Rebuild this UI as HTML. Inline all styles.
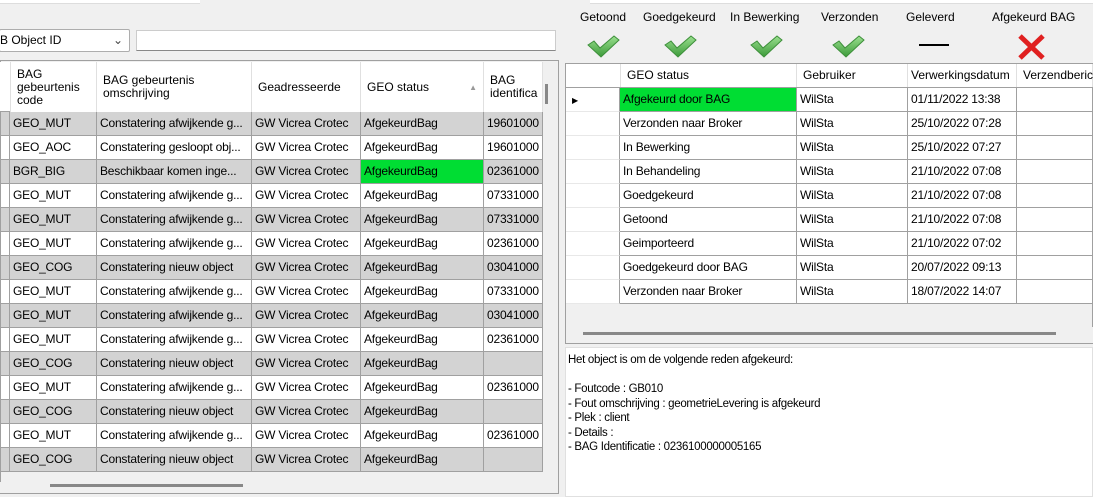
<!DOCTYPE html>
<html><head><style>
*{margin:0;padding:0;box-sizing:border-box}
body{width:1093px;height:497px;background:#f0f0f0;font-family:"Liberation Sans",sans-serif;font-size:12px;color:#000;position:relative;overflow:hidden}
.a{position:absolute}
.c{position:absolute;border-right:1px solid #a0a0a0;border-bottom:1px solid #a0a0a0;padding-left:3px;white-space:nowrap;overflow:hidden;line-height:23px;height:24px;letter-spacing:-0.2px}
.h{position:absolute;border-right:1px solid #e0e0e0;background:#fff;padding-left:6px;font-size:12px;line-height:13px;display:flex;align-items:center}
.lbl{position:absolute;top:10px;font-size:12px}
</style></head><body>
<div class="a" style="left:0;top:0;width:1093px;height:4px;background:#fff;border-bottom:1px solid #ddd"></div>
<div class="a" style="left:200px;top:0;width:390px;height:5px;background:#f0f0f0;border-bottom:1px solid #f0f0f0"></div>
<!-- combo -->
<div class="a" style="left:-1px;top:29px;width:131px;height:23px;background:#fff;border:1px solid #adadad;border-radius:2px;padding-left:0;line-height:21px">B Object ID<span style="position:absolute;right:6px;top:0;color:#444">&#8964;</span></div>
<div class="a" style="left:136px;top:30px;width:420px;height:21px;background:#fff;border:1px solid #ccc;border-bottom:1px solid #888"></div>
<!-- left grid -->
<div class="a" style="left:0;top:60px;width:559px;height:434px;border:1px solid #a0a0a0;background:#f0f0f0"></div>
<div class="a" style="left:0;top:62px;width:543px;height:50px;background:#fff;border-bottom:1px solid #a0a0a0"></div>
<div class="h" style="left:10px;top:62px;width:87px;height:50px;border-left:1px solid #e0e0e0">BAG<br>gebeurtenis<br>code</div>
<div class="h" style="left:97px;top:62px;width:155px;height:50px">BAG gebeurtenis<br>omschrijving</div>
<div class="h" style="left:252px;top:62px;width:109px;height:50px">Geadresseerde</div>
<div class="h" style="left:361px;top:62px;width:123px;height:50px">GEO status<span style="position:absolute;right:6px;font-size:8px;color:#999">&#9650;</span></div>
<div class="h" style="left:484px;top:62px;width:59px;height:50px">BAG<br>identifica</div>
<div class="a" style="left:543px;top:62px;width:15px;height:420px;background:#f0f0f0"></div>
<div class="a" style="left:545px;top:84px;width:3px;height:20px;background:#888"></div>
<div class="a" style="left:0;top:482px;width:543px;height:11px;background:#f0f0f0"></div>
<div class="a" style="left:50px;top:484px;width:193px;height:3px;background:#888"></div>
<div id="lg"></div>
<!-- status icons -->
<div class="lbl" style="left:580px">Getoond</div>
<div class="lbl" style="left:643px">Goedgekeurd</div>
<div class="lbl" style="left:730px">In Bewerking</div>
<div class="lbl" style="left:821px">Verzonden</div>
<div class="lbl" style="left:906px">Geleverd</div>
<div class="lbl" style="left:992px">Afgekeurd BAG</div>
<svg class="a" style="left:580px;top:32px" width="520" height="28">
<defs><linearGradient id="g" x1="0" y1="0" x2="0" y2="1"><stop offset="0" stop-color="#9be08f"/><stop offset="1" stop-color="#3c9a3a"/></linearGradient></defs>
<g fill="url(#g)" stroke="#3d8f3a" stroke-width="1">
<path d="M8 13 L14 9 L20 16 L34 4 L39 8 L21 25 Z"/>
<path d="M85 13 L91 9 L97 16 L111 4 L116 8 L98 25 Z"/>
<path d="M171 13 L177 9 L183 16 L197 4 L202 8 L184 25 Z"/>
<path d="M253 13 L259 9 L265 16 L279 4 L284 8 L266 25 Z"/>
</g>
<rect x="339" y="12" width="30" height="2" fill="#000"/>
<path d="M440 4 L463 26 M463 4 L440 26" stroke="#e02020" stroke-width="5"/>
</svg>
<!-- right grid -->
<div class="a" style="left:565px;top:63px;width:528px;height:281px;border:1px solid #a0a0a0;background:#f0f0f0"></div>
<div class="a" style="left:566px;top:64px;width:527px;height:24px;background:#fff;border-bottom:1px solid #a0a0a0"></div>
<div class="h" style="left:620px;top:64px;width:177px;height:23px;border-left:1px solid #e0e0e0">GEO status</div>
<div class="h" style="left:797px;top:64px;width:111px;height:23px">Gebruiker</div>
<div class="h" style="left:908px;top:64px;width:109px;height:23px;padding-left:3px">Verwerkingsdatum</div>
<div class="h" style="left:1017px;top:64px;width:76px;height:23px;padding-left:6px">Verzendberic</div>
<div id="rg"></div>
<div class="a" style="left:566px;top:327px;width:527px;height:16px;background:#f0f0f0"></div>
<div class="a" style="left:583px;top:332px;width:473px;height:3px;background:#888"></div>
<!-- text box -->
<div class="a" style="left:565px;top:347px;width:528px;height:150px;background:#fff;border:1px solid #e0e0e0;padding:5px 0 0 2px;line-height:14.5px;font-size:11.5px;letter-spacing:-0.3px">Het object is om de volgende reden afgekeurd:<br><br>- Foutcode : GB010<br>- Fout omschrijving : geometrieLevering is afgekeurd<br>- Plek : client<br>- Details :<br>- BAG Identificatie : 0236100000005165</div>
<script>
var L=[["GEO_MUT","Constatering afwijkende g...","19601000"],["GEO_AOC","Constatering gesloopt obj...","19601000"],["BGR_BIG","Beschikbaar komen inge...","02361000"],["GEO_MUT","Constatering afwijkende g...","07331000"],["GEO_MUT","Constatering afwijkende g...","07331000"],["GEO_MUT","Constatering afwijkende g...","02361000"],["GEO_COG","Constatering nieuw object","03041000"],["GEO_MUT","Constatering afwijkende g...","07331000"],["GEO_MUT","Constatering afwijkende g...","03041000"],["GEO_MUT","Constatering afwijkende g...","02361000"],["GEO_COG","Constatering nieuw object",""],["GEO_MUT","Constatering afwijkende g...","02361000"],["GEO_COG","Constatering nieuw object",""],["GEO_MUT","Constatering afwijkende g...","02361000"],["GEO_COG","Constatering nieuw object",""]];
var h="",cols=[[10,87],[97,155],[252,109],[361,123],[484,59]];
L.forEach(function(r,i){var y=112+i*24,bg=i%2==0?"#d3d3d3":"#fff";var v=[r[0],r[1],"GW Vicrea Crotec","AfgekeurdBag",r[2]];
h+='<div class="c" style="left:1px;top:'+y+'px;width:9px;background:'+bg+'"></div>';
cols.forEach(function(c,j){var b=(i==2&&j==3)?"#00dd33":bg;h+='<div class="c" style="left:'+c[0]+'px;top:'+y+'px;width:'+c[1]+'px;background:'+b+'">'+v[j]+'</div>';});});
document.getElementById("lg").innerHTML=h;
var R=[["Afgekeurd door BAG","01/11/2022 13:38"],["Verzonden naar Broker","25/10/2022 07:28"],["In Bewerking","25/10/2022 07:27"],["In Behandeling","21/10/2022 07:08"],["Goedgekeurd","21/10/2022 07:08"],["Getoond","21/10/2022 07:08"],["Geimporteerd","21/10/2022 07:02"],["Goedgekeurd door BAG","20/07/2022 09:13"],["Verzonden naar Broker","18/07/2022 14:07"]];
h="";R.forEach(function(r,i){var y=88+i*24;
h+='<div class="c" style="left:566px;top:'+y+'px;width:54px;background:#fff;border-right:1px solid #a0a0a0;border-bottom:1px solid #e8e8e8">'+(i==0?'<span style="font-size:8px;padding-left:3px">&#9654;</span>':'')+'</div>';
h+='<div class="c" style="left:620px;top:'+y+'px;width:177px;background:'+(i==0?"#00dd33":"#fff")+'">'+r[0]+'</div>';
h+='<div class="c" style="left:797px;top:'+y+'px;width:111px;background:#fff">WilSta</div>';
h+='<div class="c" style="left:908px;top:'+y+'px;width:109px;background:#fff">'+r[1]+'</div>';
h+='<div class="c" style="left:1017px;top:'+y+'px;width:76px;background:#fff"></div>';});
document.getElementById("rg").innerHTML=h;
</script>
</body></html>
